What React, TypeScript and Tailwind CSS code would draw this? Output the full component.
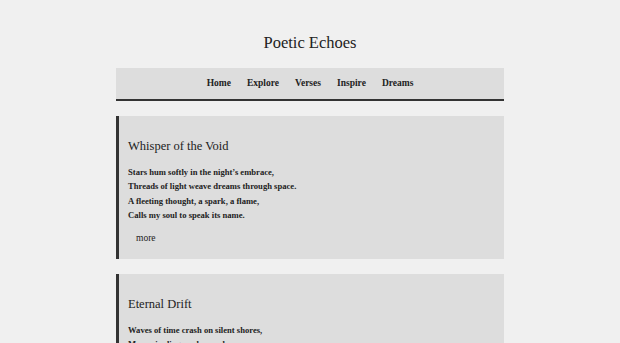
import React from "react";

const poems = [
  {
    title: "Whisper of the Void",
    lines: [
      "Stars hum softly in the night’s embrace,",
      "Threads of light weave dreams through space.",
      "A fleeting thought, a spark, a flame,",
      "Calls my soul to speak its name.",
    ],
  },
  {
    title: "Eternal Drift",
    lines: [
      "Waves of time crash on silent shores,",
      "Memories linger where echoes roar,",
      "A distant star, a fading glow,",
      "Guides the heart where rivers flow.",
    ],
  },
];

export default function App() {
  return (
    <div className="min-h-screen bg-[#f0f0f0] text-[#222] font-['Liberation_Serif',serif]">
      <h1 className="text-center text-[16.5px] leading-[20px] pt-[33px] font-normal">Poetic Echoes</h1>
      <div className="w-[388px] mx-auto mt-[15px]">
        <nav className="h-[33px] bg-[#dddddd] border-b-2 border-[#333] flex items-center justify-center gap-[16px] text-[9.5px] font-bold">
          <a>Home</a>
          <a>Explore</a>
          <a>Verses</a>
          <a>Inspire</a>
          <a>Dreams</a>
        </nav>
        <div className="mt-[15px] flex flex-col gap-[15px]">
          {poems.map((p) => (
            <section key={p.title} className="bg-[#dddddd] border-l-[3px] border-[#333] pl-[9px] pt-[22px] pb-[14px]">
              <h2 className="text-[12.5px] leading-[16px] font-normal">{p.title}</h2>
              <div className="mt-[11px] text-[8.6px] leading-[14.3px] font-bold">
                {p.lines.map((l) => (
                  <p key={l}>{l}</p>
                ))}
              </div>
              <a className="block mt-[9px] ml-[8px] text-[9.5px] leading-[14px]">more</a>
            </section>
          ))}
        </div>
      </div>
    </div>
  );
}
